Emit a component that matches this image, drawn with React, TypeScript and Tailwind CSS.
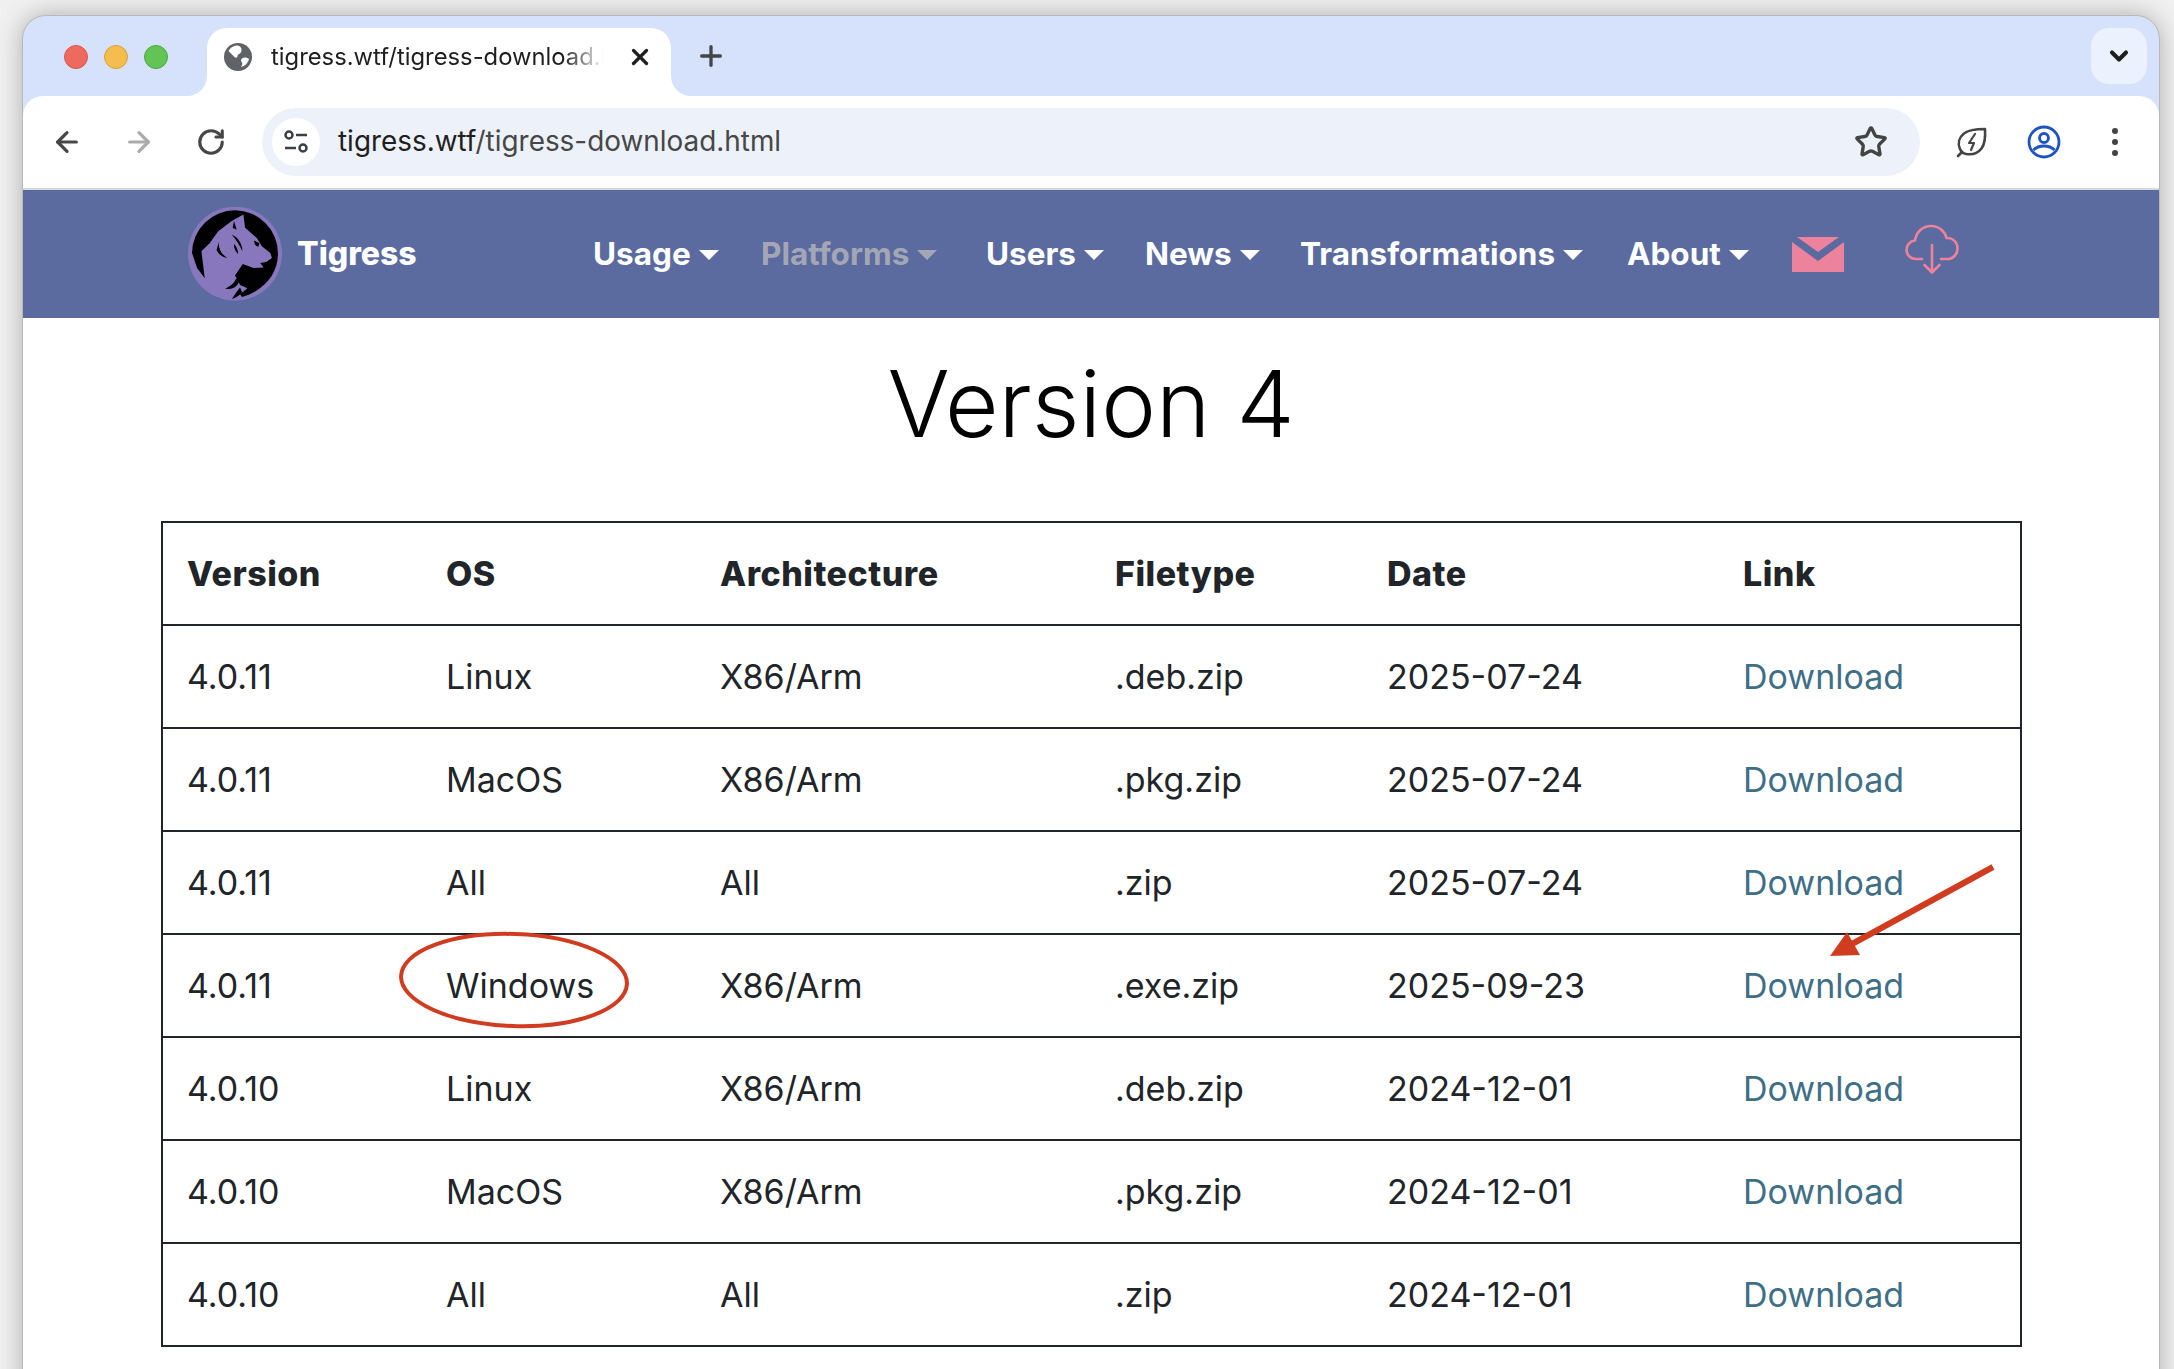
import { ArrowLeft, ArrowRight, RotateCw, Star, Plus, X, ChevronDown } from 'lucide-react';

const rows = [
  ['4.0.11', 'Linux', 'X86/Arm', '.deb.zip', '2025-07-24'],
  ['4.0.11', 'MacOS', 'X86/Arm', '.pkg.zip', '2025-07-24'],
  ['4.0.11', 'All', 'All', '.zip', '2025-07-24'],
  ['4.0.11', 'Windows', 'X86/Arm', '.exe.zip', '2025-09-23'],
  ['4.0.10', 'Linux', 'X86/Arm', '.deb.zip', '2024-12-01'],
  ['4.0.10', 'MacOS', 'X86/Arm', '.pkg.zip', '2024-12-01'],
  ['4.0.10', 'All', 'All', '.zip', '2024-12-01'],
];

const headers = ['Version', 'OS', 'Architecture', 'Filetype', 'Date', 'Link'];
const navItems = [
  { label: 'Usage', width: 'w-[168px]' },
  { label: 'Platforms', width: 'w-[225px]' },
  { label: 'Users', width: 'w-[159px]' },
  { label: 'News', width: 'w-[155px]' },
  { label: 'Transformations', width: 'w-[327px]' },
  { label: 'About', width: 'w-[165px]' },
];

const Globe = () => (
  <svg width="30" height="30" viewBox="0 0 30 30">
    <circle cx="15" cy="15" r="14" fill="#5f6368" />
    <path d="M13 3.500c-3 .5-6 2.500-7.500 5.500l6 6c1 1 3 1 3-1 0-1.500 2-2 3-3 1.500-1.500 1.500-5-.5-6.500-1-.8-2.500-1.200-4-1z" fill="#fff" />
    <path d="M26 17c-2-1.500-5-2-7-.5-1.500 1-1 3 0 4 .8 1 0 3-1 4.500 4-.8 7-4 8-8z" fill="#fff" />
  </svg>
);

const Tune = () => (
  <svg width="28" height="28" viewBox="0 0 28 28" fill="none" stroke="#3c4043" strokeWidth="2.500">
    <circle cx="7" cy="7" r="3.500" />
    <path d="M14 7h11M3 20h11" />
    <circle cx="21" cy="20" r="3.500" />
  </svg>
);

const LeafBolt = () => (
  <svg width="32" height="32" viewBox="0 0 32 32" fill="none" stroke="#444" strokeWidth="2.600" strokeLinejoin="round" strokeLinecap="round">
    <path d="M29 3c-9 0-16 .5-21 4.500-5 4-6.500 10-4 15.500 1 2.500 3 4.500 6 5 6 1 12-1 15.500-5.500C29 18 29.500 11 29 3z" />
    <path d="M2 30l4-4" />
    <path d="M19 8l-6 9h5l-3 7" strokeWidth="2.200" />
  </svg>
);

const Profile = () => (
  <svg width="34" height="34" viewBox="0 0 34 34" fill="none" stroke="#1d53c4" strokeWidth="2.800">
    <circle cx="17" cy="17" r="15" />
    <circle cx="17" cy="13" r="4.500" />
    <path d="M6.500 25c3-3 6.500-4 10.500-4s7.500 1 10.500 4" />
  </svg>
);

const Logo = () => (
  <svg width="94" height="94" viewBox="85 58 280 280">
    <circle cx="225" cy="197" r="140" fill="#8877bd" />
    <path
      d="M97 195A128 128 0 0 1 353 197C353 258 310 308 246 326L240 318 262 300 240 290 225 262 248 228 280 240 310 238 300 225 318 222 335 210 330 195 305 175 290 150 255 120 250 80 215 100 175 130 150 165 125 190 135 270 112 240Z"
      fill="#000"
    />
    <path d="M215 140c18 8 32 26 32 50-8-18-18-34-32-50zM222 168c8 8 12 16 12 30-8-8-13-18-12-30zM178 160c-4 20 4 36 24 50-12-2-26-10-32-24zM282 158l16 8-3 10c-8 0-13-8-13-18zM222 100l8 26-12-6z" fill="#000" />
    <path d="M196 302c14-8 26-14 32-30l10 4c-4 18-18 28-42 26zM216 332c8-12 14-22 24-34l6 14c-6 8-16 16-30 20z" fill="#000" />
  </svg>
);

const Cloud = () => (
  <svg width="54" height="50" viewBox="0 0 54 50" fill="none" stroke="#ec829c" strokeWidth="2.600" strokeLinecap="round" strokeLinejoin="round">
    <path d="M17 35H11C5 35 1.500 30.500 1.500 26c0-5 3.500-9 8.500-9.500C11 8 18 2 26 2c8 0 14 5.500 15.500 12 6-.5 11 4 11 10.500 0 6-4.500 10.500-10 10.500H36" />
    <path d="M27 21v26M19.500 41l7.500 7.500 7.500-7.500" />
  </svg>
);

const Mail = () => (
  <svg width="52" height="35" viewBox="0 0 52 35" className="shrink-0">
    <path d="M0 5v30h52V5L26 24z" fill="#ec829c" />
    <path d="M5 0h42L26 15z" fill="#ec829c" />
  </svg>
);

const Caret = ({ muted }: { muted?: boolean }) => (
  <span className={`w-0 h-0 mt-[2px] border-x-[10.500px] border-x-transparent border-t-[10px] ${muted ? 'border-t-[#a3a7b5]' : 'border-t-white'}`} />
);

const App = () => {
  return (
    <div className="relative h-[1369px] w-full overflow-hidden bg-[#f0f0f0] pl-[22px] pr-[14px] pt-[15px]">
      <div className="h-[1400px] rounded-t-[24px] border border-[#b9b9b9] bg-[#d6e2fb] shadow-[0_0_24px_rgba(0,0,0,0.28)] overflow-hidden" style={{ fontFamily: 'Inter, "Liberation Sans", sans-serif' }}>
        {/* tab strip */}
        <div className="flex h-[80px] items-start pt-[12px]">
          <div className="ml-[41px] mt-[17px] flex gap-[16px]">
            <span className="h-[24px] w-[24px] rounded-full border border-[#d9574e] bg-[#ee6a5f]" />
            <span className="h-[24px] w-[24px] rounded-full border border-[#d9a03c] bg-[#f5bd4f]" />
            <span className="h-[24px] w-[24px] rounded-full border border-[#4aa83c] bg-[#61c454]" />
          </div>
          <div className="relative ml-[39px] flex h-[68px] w-[464px] items-center rounded-t-[20px] bg-white pb-[10px] pl-[16px]">
            <span className="absolute bottom-0 left-[-20px] h-[20px] w-[20px] bg-white">
              <span className="block h-full w-full rounded-br-[20px] bg-[#d6e2fb]" />
            </span>
            <span className="absolute bottom-0 right-[-20px] h-[20px] w-[20px] bg-white">
              <span className="block h-full w-full rounded-bl-[20px] bg-[#d6e2fb]" />
            </span>
            <Globe />
            <span className="ml-[18px] w-[340px] overflow-hidden whitespace-nowrap text-[23.800px] text-[#1f1f1f] [mask-image:linear-gradient(to_right,black_86%,transparent_98%)]">
              tigress.wtf/tigress-download.html
            </span>
            <X className="ml-[16px] text-[#1f1f1f]" size={26} strokeWidth={3} />
          </div>
          <Plus className="ml-[24px] mt-[12px] text-[#444746]" size={32} strokeWidth={2.500} />
          <div className="ml-auto mr-[12px] flex h-[56px] w-[56px] items-center justify-center rounded-[18px] bg-[#ebf1fd]">
            <ChevronDown className="text-[#1f1f1f]" size={28} strokeWidth={3.500} />
          </div>
        </div>

        {/* toolbar */}
        <div className="flex h-[94px] items-center rounded-t-[20px] border-b-2 border-[#d5d8dc] bg-white pl-[28px] pr-[28px]">
          <ArrowLeft className="text-[#474747]" size={32} strokeWidth={2.400} />
          <ArrowRight className="ml-[40px] text-[#ababab]" size={32} strokeWidth={2.400} />
          <RotateCw className="ml-[41px] text-[#474747]" size={30} strokeWidth={2.500} />
          <div className="ml-[36px] flex h-[68px] flex-1 items-center rounded-full bg-[#edf2fa] pl-[10px] pr-[32px]">
            <span className="flex h-[48px] w-[48px] items-center justify-center rounded-full bg-white">
              <Tune />
            </span>
            <span className="ml-[18px] text-[27.900px] text-[#1f1f1f]">tigress.wtf<span className="text-[#474747]">/tigress-download.html</span></span>
            <Star className="ml-auto text-[#444]" size={34} strokeWidth={2.400} />
          </div>
          <span className="ml-[36px]"><LeafBolt /></span>
          <span className="ml-[39px]"><Profile /></span>
          <span className="ml-[38px] flex w-[32px] flex-col items-center gap-[5px]">
            <span className="h-[6px] w-[6px] rounded-full bg-[#444]" />
            <span className="h-[6px] w-[6px] rounded-full bg-[#444]" />
            <span className="h-[6px] w-[6px] rounded-full bg-[#444]" />
          </span>
        </div>

        {/* site nav */}
        <nav className="flex h-[128px] items-center bg-[#5b6b9f] pl-[165px]">
          <Logo />
          <span className="ml-[15px] w-[296px] text-[32px] font-extrabold text-white">Tigress</span>
          <div className="flex items-center">
            {navItems.map((item) => (
              <span key={item.label} className={`flex items-center gap-[8px] text-[31.500px] font-bold ${item.width} ${item.label === 'Platforms' ? 'text-[#a3a7b5]' : 'text-white'}`}>
                {item.label}
                <Caret muted={item.label === 'Platforms'} />
              </span>
            ))}
            <Mail />
          </div>
          <span className="ml-[61px] mt-[-10px]"><Cloud /></span>
        </nav>

        {/* page */}
        <main className="bg-white px-[138px] pb-[60px]">
          <h1 className="flex h-[203px] items-center justify-center pb-[32px] text-[92.500px] font-light text-black">Version 4</h1>
          <table className="w-[1859px] table-fixed border-collapse border-2 border-[#212529] text-[34px] text-[#212529]">
            <colgroup>
              <col className="w-[259px]" />
              <col className="w-[274px]" />
              <col className="w-[395px]" />
              <col className="w-[272px]" />
              <col className="w-[356px]" />
              <col className="w-[303px]" />
            </colgroup>
            <thead>
              <tr className="h-[103px] border-b-2 border-[#212529]">
                {headers.map((h) => (
                  <th key={h} className="pl-[25px] text-left font-extrabold tracking-[0.5px] first:pl-[24px]">{h}</th>
                ))}
              </tr>
            </thead>
            <tbody>
              {rows.map((r, i) => (
                <tr key={i} className="h-[103px] border-b-2 border-[#212529]">
                  {r.map((c, j) => (
                    <td key={j} className="pl-[25px] first:pl-[24px]">{c}</td>
                  ))}
                  <td className="pl-[25px] text-[#3f6f87]">Download</td>
                </tr>
              ))}
            </tbody>
          </table>
        </main>
      </div>

      {/* hand drawn annotations */}
      <svg className="absolute left-0 top-0 h-[1369px] w-[2174px]" viewBox="0 0 2174 1369" fill="none">
        <ellipse cx="514" cy="980" rx="113" ry="46" stroke="#d03c20" strokeWidth="4" transform="rotate(2 514 980)" />
        <path d="M1993 867L1852 944" stroke="#d03c20" strokeWidth="6" />
        <path d="M1830 956L1847 932L1860 955Z" fill="#d03c20" />
      </svg>
    </div>
  );
};

export default App;
